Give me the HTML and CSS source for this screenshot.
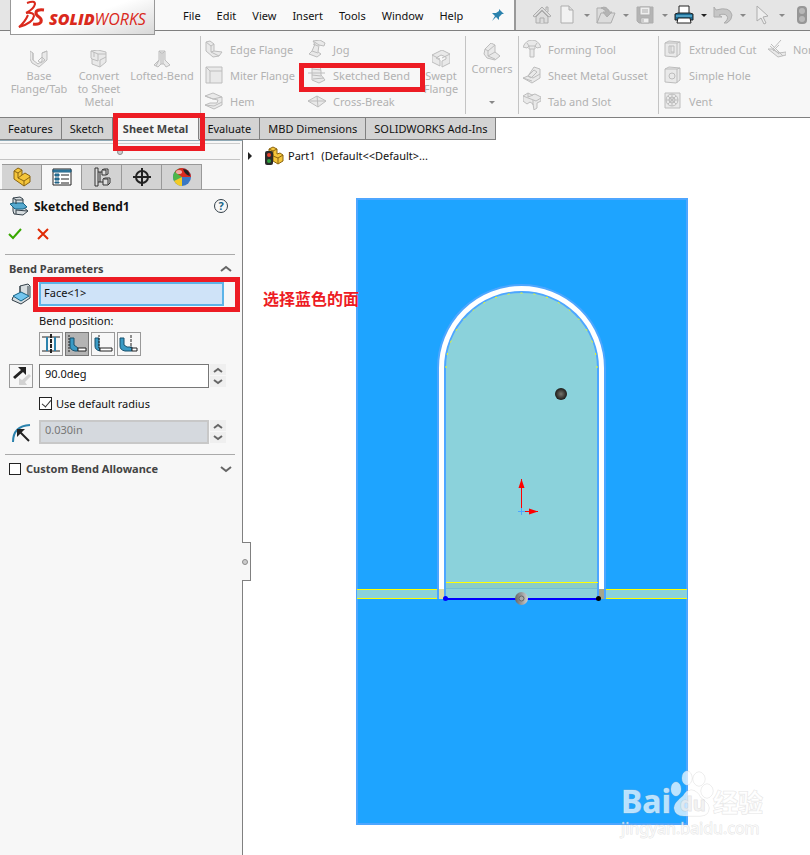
FILE: index.html
```
<!DOCTYPE html>
<html lang="en">
<head>
  <meta charset="UTF-8">
  <meta name="viewport" content="width=device-width, initial-scale=1.0">
  <title>SOLIDWORKS - Part1</title>
  <link rel="stylesheet" href="styles.css">
</head>
<body>
  <header class="titlebar">
    <div class="logo">
      <svg width="28" height="28" viewBox="0 0 28 28" fill="none" stroke="#da291c" stroke-width="2">
        <path d="M10 3q8-3 8 1q-1 5-9 9M9 13q8-1 8 3q-1 7-15 11q6-5 9-12" />
        <path d="M27 10q-8-1-8 3q0 2 3 4t2 5q-2 3-8 2" stroke-width="3" />
      </svg>
      <span class="logo-text"><b>SOLID</b>WORKS</span>
    </div>
    <nav class="menu">
      <button>File</button>
      <button>Edit</button>
      <button>View</button>
      <button>Insert</button>
      <button>Tools</button>
      <button>Window</button>
      <button>Help</button>
      <button class="pin" aria-label="Pin menu">
        <svg width="14" height="14" viewBox="0 0 14 14"><path d="M8 1l5 5-2 0-3 3 0 3-3-3-4 4 3-5-3-3h4l3-2z" fill="#2b82ad" /></svg>
      </button>
    </nav>
    <div class="quick-tools">
      <button class="home" aria-label="Home">
        <svg class="gray" width="20" height="20" viewBox="0 0 20 20"><path d="M1 11l9-9 9 9-2 1-7-7-7 7zM4 12v6h12v-6l-6-6z" /><path d="M8 18v-5h4v5M14 5V2h2v5" /></svg>
      </button>
      <button aria-label="New">
        <svg class="gray" width="20" height="20" viewBox="0 0 20 20"><path d="M4 1h8l4 4v13H4z" fill="#f2f2f2" /><path d="M12 1v4h4" /></svg>
      </button>
      <button class="drop" aria-label="New options"></button>
      <button aria-label="Open">
        <svg class="gray" width="20" height="20" viewBox="0 0 20 20"><path d="M1 18V3h6l1 2h5v4M1 18L5 8h14l-4 10z" /><path d="M5 3q6-3 8 4h3l-5 5-4-5h3q0-3-5-4z" fill="#b4b4b4" /></svg>
      </button>
      <button class="drop" aria-label="Open options"></button>
      <button aria-label="Save">
        <svg class="gray" width="20" height="20" viewBox="0 0 20 20"><path d="M2 2h16v16H4l-2-2z" fill="#b4b4b4" /><path d="M5 2h10v8H5zM6 13h8v5H6z" fill="#eee" /><path d="M7 5h6M7 7h6M8 14v3" /></svg>
      </button>
      <button class="drop" aria-label="Save options"></button>
      <button aria-label="Print">
        <svg width="20" height="20" viewBox="0 0 20 20" stroke="#222"><path d="M5 1h10v8H5z" fill="#fff" /><path d="M1 9l3-1h12l3 1v6H1z" fill="#1c6c94" /><path d="M2 11h16" stroke="#7fd0f0" /><path d="M4 13h12l1 5H3z" fill="#fff" /></svg>
      </button>
      <button class="drop dark" aria-label="Print options"></button>
      <button aria-label="Undo">
        <svg class="gray" width="20" height="20" viewBox="0 0 20 20"><path d="M1 2l2 3q14-4 16 5 0 5-5 8h-3q5-4 3-7-2-3-8-1l3 2H1z" fill="#c6c6c6" /></svg>
      </button>
      <button class="drop" aria-label="Undo options"></button>
      <button aria-label="Select">
        <svg class="gray" width="20" height="20" viewBox="0 0 20 20"><path d="M5 1l11 10-5 1 3 6-2 1-3-6-4 3z" fill="#eee" /></svg>
      </button>
      <button class="drop" aria-label="Select options"></button>
      <button aria-label="Rebuild">
        <svg width="20" height="20" viewBox="0 0 20 20"><rect x="6" y="1" width="10" height="18" rx="4" fill="#969696" /><circle cx="11" cy="6" r="3" fill="#b8b8b8" /><circle cx="11" cy="14" r="3" fill="#b8b8b8" /></svg>
      </button>
    </div>
  </header>

  <section class="ribbon">
    <div class="group base-group">
      <button class="big">
        <svg class="tool-icon" viewBox="0 0 18 18"><path d="M0 1l3 2v7l5 4 4-3V3l5-2v9l-8 7-7-4-2-4z" /><path d="M3 3v7M12 3l5-2M8 11l4-4 3 3-4 3z" /></svg>
        Base<br>Flange/Tab
      </button>
      <button class="big">
        <svg class="tool-icon" viewBox="0 0 18 18"><path d="M1 1l7-1 8 2v10l-6 5-8-3V9L1 8z" /><path d="M1 1l7 3h8M8 4v7l-6-2M10 17v-7l6-3M4 2v5" /></svg>
        Convert<br>to Sheet<br>Metal
      </button>
      <button class="big lofted">
        <svg class="tool-icon" viewBox="0 0 18 18"><path d="M6 1h6v9l5 5-4 2-2-3H8l-3 3-4-2 5-5z" /><path d="M6 1l2 2h2l2-2M8 3v11M10 3v11M6 10l-3 6" /></svg>
        Lofted-Bend
      </button>
    </div>

    <div class="group flange-group">
      <div class="tool-list">
        <button class="tool"><svg class="tool-icon" viewBox="0 0 18 18"><path d="M1 2l4-1 4 3v7l8 1-3 4-6 1-7-6z" /><path d="M1 2l5 4v6l8 4M6 6l3-2M6 12l3-1" /></svg>Edge Flange</button>
        <button class="tool"><svg class="tool-icon" viewBox="0 0 18 18"><path d="M1 1h16v16H1z" /><path d="M1 1l4 4M17 5H5v12" /></svg>Miter Flange</button>
        <button class="tool"><svg class="tool-icon" viewBox="0 0 18 18"><path d="M0 4l8-3 9 4v8l-8 4-9-4 5-2h7l1-3-5-1z" /><path d="M0 4l8 3 9-2M0 13l9 1 8-4" /></svg>Hem</button>
      </div>
      <div class="tool-list wide">
        <button class="tool"><svg class="tool-icon" viewBox="0 0 18 18"><path d="M5 1l7-1 5 3-1 3-5-1-1 7 3 2-4 3-8-3 3-3 3-7z" /><path d="M5 1l6 4M4 11l6 2M5 4l5 2" /></svg>Jog</button>
        <button class="tool marked">
          <svg class="tool-icon" viewBox="0 0 18 18"><path d="M4 1l8-1 1 5v4l4 5-6 3-7-3V9z" /><path d="M0 7h17M4 3l9 1M4 9l9 1M5 13l11-1" /></svg>Sketched Bend
          <span class="mark mark-bend"></span>
        </button>
        <button class="tool"><svg class="tool-icon" viewBox="0 0 18 18"><path d="M0 9l9-5 9 5-8 6z" /><path d="M0 9h18M9 4l1 11" /></svg>Cross-Break</button>
      </div>
      <button class="big swept">
        <svg class="tool-icon" viewBox="0 0 18 18"><path d="M0 5l10-5 8 4v9l-8 4v-6l4-2V7l-5-2-5 3 4 2v6l-8-4z" /><path d="M0 5l8 4M18 4l-8 4" /></svg>
        Swept<br>Flange
      </button>
    </div>

    <div class="group corner-group">
      <button class="big corners">
        <svg class="tool-icon" viewBox="0 0 18 18"><path d="M2 6l6-6 4 2v7l5 4-5 4-8-2-3-4z" /><path d="M2 6l3 2v5l7-4M5 8l7-6M5 13l7 3" /></svg>
        Corners
        <span class="caret"></span>
      </button>
    </div>

    <div class="group form-group">
      <div class="tool-list">
        <button class="tool"><svg class="tool-icon" viewBox="0 0 18 18"><path d="M0 7q3-7 9-7t9 7l-4 1-2-2v3h-1v8H7V9H6V6L4 8z" /><path d="M4 3l2 3h6l2-3M7 9h4" /></svg>Forming Tool</button>
        <button class="tool"><svg class="tool-icon" viewBox="0 0 18 18"><path d="M0 12l5-2 6-9 6 2v9l-8 5z" /><path d="M5 10l5 2 7-4M5 10l6-6 3 2-6 6zM0 12l9 3" /></svg>Sheet Metal Gusset</button>
        <button class="tool"><svg class="tool-icon" viewBox="0 0 18 18"><path d="M0 4l5-3 4 2 3-1 6 3v4l-4 2v5l-3 2-1-6-3-2-3 2-4-3z" /><path d="M0 4l13 5 5-3M10 8v5M5 1v4l5-2" /></svg>Tab and Slot</button>
      </div>
    </div>

    <div class="group cut-group">
      <div class="tool-list cut">
        <button class="tool"><svg class="tool-icon" viewBox="0 0 18 18"><path d="M1 3l4-2 11 1v12l-4 3-11-1z" /><path d="M1 3h12v14M13 3l3-1M5 6h5v7H5zM7 6v6h3" /></svg>Extruded Cut</button>
        <button class="tool"><svg class="tool-icon" viewBox="0 0 18 18"><path d="M1 3l4-2 11 1v12l-4 3-11-1z" /><path d="M1 3h12v14M13 3l3-1" /><circle cx="8" cy="10" r="3" /></svg>Simple Hole</button>
        <button class="tool"><svg class="tool-icon" viewBox="0 0 18 18"><path d="M1 1h15v15H1z" /><circle cx="8" cy="8" r="6" /><circle cx="8" cy="8" r="3" /><path d="M8 2v12M2 8h12M4 4l8 8M12 4l-8 8" /></svg>Vent</button>
      </div>
      <div class="tool-list">
        <button class="tool"><svg class="tool-icon" viewBox="0 0 18 18"><path d="M0 9h4l7 4 7-1v3l-8 2z" /><path d="M13 0L5 9M11 5l-6 6M3 4l12 12M2 6l9 8" /></svg>Normal Cut</button>
      </div>
    </div>
  </section>

  <nav class="tabs">
    <button>Features</button>
    <button>Sketch</button>
    <button class="active">Sheet Metal<span class="mark mark-tab"></span></button>
    <button>Evaluate</button>
    <button>MBD Dimensions</button>
    <button>SOLIDWORKS Add-Ins</button>
  </nav>

  <main class="workspace">
    <aside class="sidebar">
      <div class="grip"><i class="dot"></i></div>
      <div class="panel-tabs">
        <button aria-label="Feature tree">
          <svg width="20" height="20" viewBox="0 0 20 20" fill="#f4c53a" stroke="#8a6410"><path d="M2 4l4-3 4 2v5l3-2 5 3v6l-6 4-10-7z" /><path d="M2 4l4 2v5l6 3v5M6 6l4-3M12 14l6-4M6 11l4-3" fill="none" /></svg>
        </button>
        <button class="active" aria-label="Properties">
          <svg width="20" height="20" viewBox="0 0 20 20" fill="#fff" stroke="#222"><path d="M1 2h18v16H1z" /><path d="M1 3h18v2H1z" fill="#3d8db5" stroke="#1d5b7c" /><path d="M9 8h8M9 12h8M9 16h8" stroke-width="1" /><path d="M3 7h4v2H3zM3 11h4v2H3zM3 15h4v1H3z" fill="#2b82ad" stroke="#1d5b7c" /></svg>
        </button>
        <button aria-label="Configurations">
          <svg width="20" height="20" viewBox="0 0 20 20" fill="#ddd" stroke="#333"><path d="M3 1h3v18H3zM6 5h4M6 15h5M8 15V5" /><path d="M10 3l2-1h4v5l-2 1h-4zM11 12l2-1h5v5l-2 2h-5z" /><path d="M10 3h4v5M11 12h5v6" /></svg>
        </button>
        <button aria-label="Dimensions">
          <svg width="20" height="20" viewBox="0 0 20 20" fill="none" stroke="#222" stroke-width="2"><circle cx="10" cy="10" r="6" /><path d="M10 1v18M1 10h18" /></svg>
        </button>
        <button aria-label="Appearances">
          <svg width="20" height="20" viewBox="0 0 20 20"><circle cx="10" cy="10" r="9" fill="#3a78c4" /><path d="M10 10L2 14A9 9 0 0 1 10 1z" fill="#4eb648" /><path d="M10 10L3 5Q6 1 10 1a9 9 0 0 1 9 9z" fill="#d92b20" /><path d="M10 10L2 14q3 5 8 5z" fill="#f3cb25" /><path d="M11 2q6 0 7 7-5-1-7-7z" fill="#222" /><ellipse cx="7" cy="5" rx="3" ry="2" fill="#fff" opacity=".6" /></svg>
        </button>
      </div>

      <div class="title-row">
        <svg width="18" height="20" viewBox="0 0 18 20" stroke="#344049" fill="#d7dde0"><path d="M3 2l7-1 3 2v8l5 4-5 4-9-1-1-3z" /><path d="M0 8l3-1h10l4 4-4 2H5z" fill="#55a9cf" stroke="#176386" /><path d="M3 2l3 2h7M6 4v4M6 14v4M6 14l11 1" fill="none" /></svg>
        <h2>Sketched Bend1</h2>
        <button class="help" aria-label="Help">?</button>
      </div>
      <div class="confirm-row">
        <button aria-label="OK"><svg width="16" height="14" viewBox="0 0 16 14"><path d="M2 7l4 4 8-9" fill="none" stroke="#38a800" stroke-width="2" /></svg></button>
        <button aria-label="Cancel"><svg width="14" height="14" viewBox="0 0 14 14"><path d="M2 2l10 10M12 2L2 12" stroke="#e02b05" stroke-width="2" /></svg></button>
      </div>

      <section class="params">
        <div class="section-head">
          <h3>Bend Parameters</h3>
          <button aria-label="Collapse"><svg class="chevron" width="12" height="8" viewBox="0 0 12 8"><path d="M1 6l5-4 5 4" /></svg></button>
        </div>
        <div class="row face-row">
          <svg width="20" height="22" viewBox="0 0 20 22" stroke="#344049" fill="#d7dde0"><path d="M9 3l8-2 2 2v12l-9 6-9-4 1-3 7-4z" /><path d="M2 13l8-4 8 4-8 5z" fill="#73c6ef" stroke="#176386" /><path d="M9 3v6M17 3v9" /></svg>
          <input class="selection" type="text" value="Face&lt;1&gt;" aria-label="Fixed face" readonly>
          <span class="mark mark-face"></span>
        </div>
        <p class="field-label">Bend position:</p>
        <div class="positions">
          <button aria-label="Bend centerline"><svg width="20" height="20" viewBox="0 0 20 20" fill="none" stroke="#222"><path d="M1 3h18M1 17h18" /><path d="M6 3v14M14 3v14" stroke="#2b82ad" stroke-width="2" /><path d="M10 0v20" stroke-width="2" stroke-dasharray="4 1" /></svg></button>
          <button class="active" aria-label="Material inside"><svg width="20" height="20" viewBox="0 0 20 20" stroke="#174f6b"><path d="M3 4h4v7l4 3v3H8q-5-1-5-5z" fill="#3a9ac4" /><path d="M11 14h8v3h-8z" fill="#fff" stroke="#222" /><path d="M2 1v18" stroke="#222" stroke-dasharray="2 1" /></svg></button>
          <button aria-label="Material outside"><svg width="20" height="20" viewBox="0 0 20 20" stroke="#174f6b"><path d="M2 4h4v9l1 4q-5-1-5-5z" fill="#3a9ac4" /><path d="M7 14h12v3H7z" fill="#fff" stroke="#222" /><path d="M6 1v13" stroke="#222" stroke-dasharray="2 1" /></svg></button>
          <button aria-label="Bend outside"><svg width="20" height="20" viewBox="0 0 20 20" stroke="#174f6b"><path d="M1 4h4v7l3 2h5v4H6q-5-1-5-5z" fill="#3a9ac4" /><path d="M13 14h5v3h-5z" fill="#fff" stroke="#222" /><path d="M12 1v13" stroke="#222" stroke-dasharray="3 1" /></svg></button>
        </div>
        <div class="row">
          <button class="flip" aria-label="Reverse direction"><svg width="20" height="20" viewBox="0 0 20 20"><path d="M18 8l2 2-6 6 2 3H8v-7l3 2z" fill="#d2d2d2" /><path d="M7 1h8v8l-3-3-8 7-2-2 8-7z" fill="#222" /></svg></button>
          <input class="value" type="text" value="90.0deg" aria-label="Bend angle">
          <div class="spinner">
            <button aria-label="Increase angle"><svg class="chevron" width="10" height="6" viewBox="0 0 10 6"><path d="M1 5l4-3 4 3" /></svg></button>
            <button aria-label="Decrease angle"><svg class="chevron" width="10" height="6" viewBox="0 0 10 6"><path d="M1 1l4 3 4-3" /></svg></button>
          </div>
        </div>
        <label class="check indent"><input type="checkbox" checked>Use default radius</label>
        <div class="row">
          <svg width="24" height="22" viewBox="0 0 24 22" fill="none"><path d="M4 21Q4 5 21 4" stroke="#2b82ad" stroke-width="2" /><path d="M20 20l-9-9" stroke="#222" stroke-width="2" /><path d="M8 8h8l-8 8z" fill="#222" /></svg>
          <input class="value" type="text" value="0.030in" aria-label="Bend radius" disabled>
          <div class="spinner">
            <button aria-label="Increase radius"><svg class="chevron" width="10" height="6" viewBox="0 0 10 6"><path d="M1 5l4-3 4 3" /></svg></button>
            <button aria-label="Decrease radius"><svg class="chevron" width="10" height="6" viewBox="0 0 10 6"><path d="M1 1l4 3 4-3" /></svg></button>
          </div>
        </div>
      </section>

      <section class="allowance">
        <div class="section-head">
          <label class="check strong"><input type="checkbox">Custom Bend Allowance</label>
          <button aria-label="Expand"><svg class="chevron" width="12" height="8" viewBox="0 0 12 8"><path d="M1 2l5 4 5-4" /></svg></button>
        </div>
      </section>
      <div class="side-handle"><i class="dot"></i></div>
    </aside>

    <section class="viewport">
      <div class="tree-root">
        <svg width="6" height="10" viewBox="0 0 6 10"><path d="M1 1l4 4-4 4z" fill="#222" /></svg>
        <svg class="part-icon" width="20" height="20" viewBox="0 0 20 20"><path d="M5 3l4-2 4 2v5l3-1 3 2v6l-5 3-5-3V8L5 7z" fill="#f4c53a" stroke="#8a6410" /><path d="M5 3l4 2 4-2M9 5v5l5 2 5-3M14 12v6" fill="none" stroke="#8a6410" /><rect x="1" y="5" width="8" height="14" rx="2" fill="#2a2a2a" /><circle cx="5" cy="9" r="2" fill="#e8412f" /><circle cx="5" cy="15" r="2" fill="#2f9e3f" /></svg>
        <span>Part1&nbsp; (Default&lt;&lt;Default&gt;...</span>
      </div>

      <!-- sheet metal part -->
      <svg class="model" width="332" height="627" viewBox="356 198 332 627">
        <defs>
          <radialGradient id="ball"><stop offset="0" stop-color="#77756c" /><stop offset="1" stop-color="#1c1b18" /></radialGradient>
          <linearGradient id="knob"><stop offset="0" stop-color="#666" /><stop offset="1" stop-color="#d0d0d0" /></linearGradient>
        </defs>
        <rect x="357" y="199" width="330" height="625" fill="#1ea4ff" stroke="#4da6ff" stroke-width="2" />
        <path d="M357 589h81v10h-81zM605 589h82v10h-82z" fill="#8bd2db" />
        <path d="M357 589.500h81M357 598.500h81M605 589.500h82M605 598.500h82" stroke="#ff0" />
        <path d="M438 599V368a83.500 83 0 0 1 167 0V599z" fill="#fff" />
        <path d="M438 599V368a83.500 83 0 0 1 167 0V599" fill="none" stroke="#4da6ff" stroke-width="2" />
        <path d="M439 589h6v10h-6z" fill="#dedda5" />
        <path d="M599 589h5v10h-5z" fill="#a5a58b" />
        <path d="M445 599V368a76.500 76 0 0 1 153 0V599z" fill="#8bd2db" />
        <path d="M446 583h152v6H446z" fill="#8accc8" />
        <path d="M446 588.500h152" stroke="#72bfd2" />
        <path d="M445 599V368a76.500 76 0 0 1 153 0V599" fill="none" stroke="#4da6ff" stroke-width="2" />
        <path d="M446 368a75.500 75 0 0 1 151 0" fill="none" stroke="#ff0" stroke-dasharray="2 11" />
        <path d="M446 582.500h152" stroke="#ff0" />
        <path d="M445 599h154" stroke="#00f" stroke-width="2" />
        <circle cx="445.500" cy="598.500" r="2.500" fill="#00f" />
        <circle cx="598.500" cy="598.500" r="2.500" fill="#000" />
        <circle cx="521.500" cy="598.500" r="6.500" fill="url(#knob)" />
        <circle cx="521.500" cy="598.500" r="2.500" fill="#aaa" stroke="#666" />
        <circle cx="561" cy="394" r="6" fill="url(#ball)" />
        <path d="M521.500 508v7M518 511.500h7" stroke="#4da6ff" />
        <path d="M521.500 508v-29M525 511.500h13" stroke="#f00" />
        <path d="M521.500 479l3 9h-6zM538 511.500l-9-3v6z" fill="#f00" />
      </svg>

      <p class="note">选择蓝色的面</p>

      <svg class="watermark" width="150" height="76" viewBox="0 0 150 76">
        <text class="wm-brand" x="0" y="44">Bai</text>
        <g class="wm-paw">
          <ellipse cx="55" cy="20" rx="5" ry="7" />
          <ellipse cx="66" cy="9" rx="5" ry="7" />
          <ellipse cx="78" cy="10" rx="6" ry="7" />
          <ellipse cx="86" cy="22" rx="6" ry="7" />
          <path d="M70 21q-5 0-8 6-9 7-9 12 1 8 10 8h16q9 0 9-8 0-5-8-10-4-8-10-8z" />
        </g>
        <text class="wm-du" x="59" y="42">du</text>
        <text class="wm-cn" x="92" y="43">经验</text>
        <text class="wm-url" x="0" y="65">jingyan.baidu.com</text>
      </svg>
    </section>
  </main>
</body>
</html>
```

FILE: styles.css
```
/* Reset */
* {
  box-sizing: border-box;
}

body, h2, h3, p {
  margin: 0;
}

body {
  display: flex;
  flex-direction: column;
  min-height: 100vh;
  overflow: hidden;
  font-family: "Noto Sans", "Noto Sans CJK SC", sans-serif;
  font-size: 11px;
  color: #111;
  background: #fff;
}

button {
  display: flex;
  align-items: center;
  padding: 0;
  border: none;
  background: none;
  font: inherit;
  color: inherit;
}

svg {
  flex: none;
}

/* Title bar */
.titlebar {
  display: flex;
  height: 31px;
  padding-left: 10px;
  background: #e5e5e5;
  border-bottom: 1px solid #808080;
}

.logo {
  display: flex;
  align-items: center;
  flex: none;
  position: relative;
  z-index: 1;
  width: 145px;
  height: 35px;
  padding: 0 0 6px 6px;
  border: 1px solid #999;
  border-top: none;
  background: linear-gradient(160deg, #fff 50%, #d8d8d8);
}

.logo-text {
  padding: 9px 0 0 4px;
  font-family: "Open Sans", sans-serif;
  font-size: 16px;
  line-height: 20px;
  font-style: italic;
  color: #da291c;
}

.logo-text b {
  font-weight: 800;
}

.menu {
  display: flex;
  flex: none;
  gap: 16px;
  width: 361px;
  padding-left: 28px;
  background: #f9f9f9;
  border-right: 2px solid #999;
}

.pin {
  margin-left: 12px;
}

.quick-tools {
  display: flex;
  flex: none;
  padding-left: 16px;
}

.quick-tools .home {
  margin-right: 5px;
}

.gray {
  fill: #dcdcdc;
  stroke: #adadad;
}

.drop {
  justify-content: center;
  width: 19px;
}

.drop::after,
.caret {
  content: "";
  border: 3px solid transparent;
  border-top-color: #888;
  border-bottom: none;
}

.dark::after {
  border-top-color: #222;
}

/* Ribbon */
.ribbon {
  display: flex;
  height: 87px;
  padding: 5px 0 3px;
  overflow: hidden;
  background: #f7f7f7;
  border-bottom: 1px solid #808080;
  color: #b2b2b2;
}

.group {
  display: flex;
  flex: none;
  border-right: 1px solid #c4c4c4;
}

.base-group {
  width: 201px;
  padding-left: 9px;
}

.flange-group {
  width: 265px;
  padding-left: 4px;
}

.corner-group {
  width: 53px;
}

.form-group {
  width: 140px;
  padding-left: 4px;
}

.cut-group {
  padding-left: 5px;
  border-right: none;
}

.big {
  flex-direction: column;
  width: 60px;
  padding-top: 14px;
  line-height: 13px;
  text-align: center;
}

.big .tool-icon {
  margin-bottom: 1px;
}

.lofted {
  width: 66px;
}

.swept {
  width: 48px;
}

.corners {
  width: 52px;
  padding-top: 7px;
}

.caret {
  margin-top: 26px;
}

.tool-list {
  width: 103px;
}

.tool-list.wide {
  width: 109px;
}

.tool-list.cut {
  width: 104px;
}

.tool {
  position: relative;
  gap: 7px;
  height: 26px;
  white-space: nowrap;
}

.tool-icon {
  width: 18px;
  height: 18px;
  fill: #e9e9e9;
  stroke: #bdbdbd;
}

.tool-icon path + path {
  fill: none;
}

/* Command tabs */
.tabs {
  display: flex;
  height: 22px;
}

.tabs button {
  position: relative;
  padding: 0 8px;
  background: #d3d3d3;
  border-right: 1px solid #808080;
  border-bottom: 1px solid #808080;
}

.tabs .active {
  padding: 0 10px;
  background: #f7f7f7;
  border-bottom-color: #f7f7f7;
  font-weight: bold;
  color: #444;
}

/* Red callout frames */
.mark {
  position: absolute;
  z-index: 2;
  border: 5px solid #ed1c24;
  pointer-events: none;
}

.mark-tab {
  inset: -5px -7px -12px 0;
}

.mark-bend {
  inset: 1px -15px -4px -9px;
}

.mark-face {
  inset: -5px -8px -6px 24px;
}

/* Property panel */
.workspace {
  display: flex;
  flex: 1;
}

.sidebar {
  position: relative;
  flex: none;
  width: 243px;
  background: #f7f7f7;
  border-right: 1px solid #808080;
  border-top: 1px solid #8fa9b5;
}

.grip {
  display: flex;
  align-items: center;
  justify-content: center;
  height: 17px;
  margin: 2px 2px 0 0;
  border-top: 1px solid #ccc;
  border-bottom: 1px solid #c4c4c4;
}

.dot {
  width: 6px;
  height: 6px;
  border: 1px solid #8c8c8c;
  border-radius: 50%;
  background: #ccc;
}

.panel-tabs {
  display: flex;
  height: 30px;
  margin-right: 2px;
  padding: 4px 0 0 2px;
  border-bottom: 1px solid #a5a5a5;
}

.panel-tabs button {
  justify-content: center;
  width: 40px;
  height: 26px;
  background: #d3d3d3;
  border: 1px solid #999;
  border-left: none;
}

.panel-tabs .active {
  background: #f7f7f7;
  border-bottom-color: #f7f7f7;
}

.title-row {
  display: flex;
  align-items: center;
  gap: 6px;
  height: 32px;
  padding: 0 14px 0 10px;
}

h2 {
  font-size: 12px;
}

.help {
  justify-content: center;
  width: 14px;
  height: 14px;
  margin-left: auto;
  border: 1px solid #344049;
  border-radius: 50%;
  font-weight: bold;
  line-height: 12px;
  color: #176386;
}

.confirm-row {
  display: flex;
  gap: 13px;
  height: 32px;
  padding: 5px 0 0 7px;
  align-items: flex-start;
}

.params,
.allowance {
  margin: 0 7px 0 5px;
  padding: 0 3px 0 4px;
  border-top: 1px solid #aaa;
}

.section-head {
  display: flex;
  align-items: center;
  justify-content: space-between;
  height: 27px;
}

h3,
.strong {
  font-size: 11px;
  font-weight: bold;
  color: #444;
}

.chevron {
  fill: none;
  stroke: #666;
  stroke-width: 2;
}

.row {
  display: flex;
  align-items: center;
}

.row > svg,
.flip {
  width: 24px;
  margin-right: 6px;
}

.face-row {
  position: relative;
}

.selection,
.value {
  width: 170px;
  height: 24px;
  padding: 0 5px 4px;
  border: 1px solid #777;
  background: #fff;
  font: inherit;
  color: #111;
}

.selection {
  width: 185px;
  padding: 0 3px 4px;
  border: 2px solid #5db4e8;
  background: #cfe3f8;
}

.value:disabled {
  padding: 0 4px 4px;
  border: 2px solid #c8c8c8;
  background: #d5d9de;
  color: #777;
}

.field-label {
  padding: 7px 0 3px 30px;
  line-height: 16px;
}

.positions {
  display: flex;
  gap: 2px;
  margin: 0 0 7px 30px;
}

.positions button,
.flip {
  justify-content: center;
  height: 24px;
  border: 1px solid #999;
}

.positions button {
  width: 24px;
}

.positions .active {
  background: #b4b4b4;
  border-color: #777;
}

.spinner {
  margin-left: 1px;
}

.spinner button {
  justify-content: center;
  width: 16px;
  height: 11px;
  margin: 1px 0;
  background: #efefef;
}

.check {
  display: flex;
  align-items: center;
  gap: 4px;
}

.check.indent {
  height: 31px;
  padding-left: 30px;
}

.check input {
  appearance: none;
  width: 12px;
  height: 12px;
  margin: 0;
  border: 1px solid #222;
  background: #fff;
}

.check input:checked {
  width: 13px;
  height: 13px;
}

.check input:checked::after {
  content: "";
  display: block;
  width: 4px;
  height: 8px;
  margin: 0 0 0 4px;
  border: solid #333;
  border-width: 0 1px 1px 0;
  transform: rotate(40deg);
}

.allowance {
  margin-top: 10px;
}

.strong {
  gap: 5px;
}

.side-handle {
  display: flex;
  align-items: center;
  position: absolute;
  top: 401px;
  right: -9px;
  width: 9px;
  height: 39px;
  border: 1px solid #808080;
  border-left: none;
  background: #f7f7f7;
}

/* Graphics area */
.viewport {
  position: relative;
  flex: 1;
}

.tree-root {
  display: flex;
  align-items: center;
  height: 31px;
  padding-left: 4px;
}

.part-icon {
  margin: 0 4px 0 11px;
}

.model {
  display: block;
  margin: 27px 0 0 113px;
}

.note {
  position: absolute;
  top: 146px;
  left: 20px;
  font-family: "Noto Sans CJK SC", sans-serif;
  font-size: 16px;
  line-height: 24px;
  font-weight: bold;
  color: #ed1c24;
}

.watermark {
  position: absolute;
  right: 39px;
  bottom: 10px;
  overflow: visible;
  fill: #fff;
  fill-opacity: .7;
  stroke: #bbb;
  stroke-opacity: .4;
  font-family: "Noto Sans", sans-serif;
  paint-order: stroke;
}

.wm-brand,
.wm-du {
  font-size: 32px;
  font-weight: bold;
}

.wm-du {
  font-size: 20px;
  fill: #eee;
}

.wm-cn {
  font-family: "Noto Sans CJK SC", sans-serif;
  font-size: 25px;
  font-weight: bold;
}

.wm-url {
  font-size: 16px;
}
```
